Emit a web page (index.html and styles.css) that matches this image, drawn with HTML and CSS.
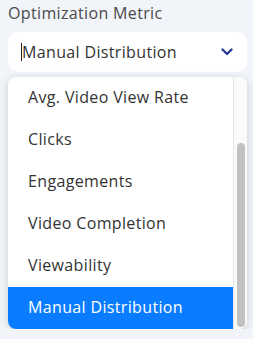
FILE: index.html
```html
<!DOCTYPE html>
<html lang="en">
<head>
    <meta charset="UTF-8">
    <meta name="viewport" content="width=device-width, initial-scale=1.0">
    <title>Optimization Metric</title>
    <link rel="stylesheet" href="styles.css">
</head>
<body>

<div class="field">
    <label class="field-label">Optimization Metric</label>

    <div class="select">
        <span class="text-cursor"></span>
        <span class="select-value">Manual Distribution</span>
        <svg class="chevron" width="12" height="8" viewBox="0 0 12 8">
            <path d="M1.5 1.5 L6 6 L10.5 1.5" fill="none" stroke="#2e3a9a" stroke-width="2.4" stroke-linecap="round" stroke-linejoin="round"/>
        </svg>
    </div>

    <div class="menu">
        <ul class="menu-list">
            <li class="menu-item">Avg. Video View Rate</li>
            <li class="menu-item">Clicks</li>
            <li class="menu-item">Engagements</li>
            <li class="menu-item">Video Completion</li>
            <li class="menu-item">Viewability</li>
            <li class="menu-item selected">Manual Distribution</li>
        </ul>
        <div class="scrollbar">
            <div class="scrollbar-thumb"></div>
        </div>
    </div>
</div>

</body>
</html>
```

FILE: styles.css
```css
body {
    font-family: "Open Sans", Arial, sans-serif;
    background-color: #f1f4f9;
    color: #333;
    margin: 0;
    padding: 0 6px 0 8px;
    letter-spacing: 0.35px;
}

.field {
    display: flex;
    flex-direction: column;
}

.field-label {
    display: block;
    height: 32px;
    line-height: 27px;
    font-size: 16px;
    color: #4a4a4a;
}

.select {
    display: flex;
    align-items: center;
    height: 40px;
    padding: 0 14px 0 13px;
    background: #fff;
    border-radius: 10px;
    box-sizing: border-box;
}

.text-cursor {
    width: 1px;
    height: 18px;
    background: #222;
}

.select-value {
    flex: 1;
    font-size: 16px;
    color: #333;
}

.chevron {
    display: block;
}

.menu {
    display: flex;
    margin-top: 5px;
    height: 252px;
    background: #fff;
    border-radius: 8px;
    box-shadow: 0 2px 8px rgba(0, 0, 0, 0.16);
    overflow: hidden;
}

.menu-list {
    flex: 1;
    list-style: none;
    margin: 0;
    padding: 0;
}

.menu-item {
    height: 42px;
    line-height: 41px;
    padding-left: 20px;
    font-size: 16px;
    color: #333;
}

.menu-item.selected {
    background-color: #0a7cff;
    color: #fff;
}

.scrollbar {
    width: 14px;
    background: #fafafa;
    border-left: 1px solid #e6e6e6;
    box-sizing: border-box;
}

.scrollbar-thumb {
    width: 8px;
    height: 184px;
    margin: 66px 0 0 3px;
    background: #c1c1c1;
    border-radius: 4px;
}
```
